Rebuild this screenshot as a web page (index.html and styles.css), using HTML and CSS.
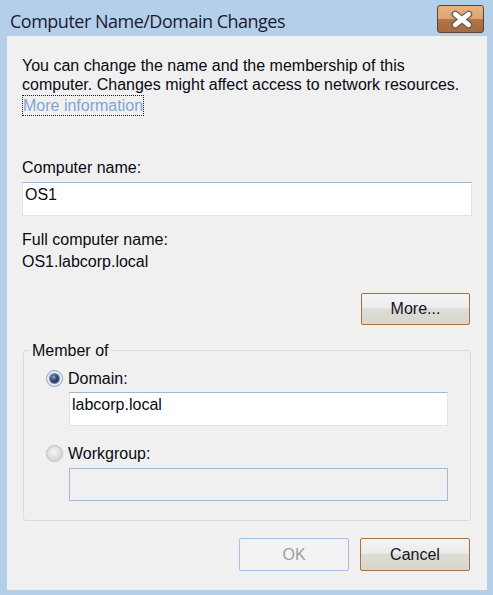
FILE: index.html
```html
<!DOCTYPE html>
<html>
<head>
<meta charset="utf-8">
<link rel="stylesheet" href="styles.css">
</head>
<body>
<div class="window">
  <div class="titlebar">
    <span class="title">Computer Name/Domain Changes</span>
    <button class="close" type="button" aria-label="Close">
      <svg width="47" height="27" viewBox="0 0 47 27">
        <g stroke-linecap="round">
          <path d="M18 8 L32 19 M32 8 L18 19" stroke="#5e5a58" stroke-width="7.5" fill="none"/>
          <path d="M18 8 L32 19 M32 8 L18 19" stroke="#ffffff" stroke-width="5" fill="none"/>
        </g>
      </svg>
    </button>
  </div>
  <div class="client">
    <p class="intro">You can change the name and the membership of this<br>computer. Changes might affect access to network resources.</p>
    <a class="link">More information</a>
    <div class="lbl cn-label">Computer name:</div>
    <div class="textbox main">OS1</div>
    <div class="lbl full-label">Full computer name:</div>
    <div class="lbl full-value">OS1.labcorp.local</div>
    <div class="row-right more-row">
      <button class="btn default" type="button">More...</button>
    </div>
    <fieldset class="group">
      <legend>Member of</legend>
      <div class="radio-row">
        <span class="radio checked"></span><span>Domain:</span>
      </div>
      <div class="textbox sub">labcorp.local</div>
      <div class="radio-row wg">
        <span class="radio disabled"></span><span>Workgroup:</span>
      </div>
      <div class="textbox sub disabled"></div>
    </fieldset>
    <div class="row-right actions">
      <button class="btn off" type="button">OK</button>
      <button class="btn default" type="button">Cancel</button>
    </div>
  </div>
</div>
</body>
</html>
```

FILE: styles.css
```css
html, body {
  margin: 0;
  padding: 0;
  background: #b3cfe9;
}

.window {
  width: 493px;
  height: 595px;
  background: #b3cfe9;
  overflow: hidden;
}

.titlebar {
  height: 36px;
  display: flex;
  align-items: flex-start;
}

.title {
  font-family: "Open Sans", "Noto Sans", sans-serif;
  font-size: 18px;
  line-height: 26px;
  color: #1c1a2e;
  margin: 8px 0 0 10px;
  letter-spacing: -0.5px;
}

.close {
  margin: 5px 9px 0 auto;
  width: 47px;
  height: 28px;
  padding: 0;
  border: 1px solid #5f4330;
  border-radius: 3px;
  background: linear-gradient(#e8b27f 0%, #e2a470 48%, #b2744a 52%, #a56a40 100%);
  display: flex;
  align-items: center;
  justify-content: center;
}

.close svg {
  display: block;
}

.client {
  margin: 0 6px 0 7px;
  height: 554px;
  box-sizing: border-box;
  background: #f0f0f0;
  padding: 20px 15px 0 15px;
  font-family: "Liberation Sans", Arial, sans-serif;
  font-size: 16px;
  line-height: 19px;
  color: #0a0a14;
}

.intro {
  margin: 0;
}

.link {
  display: block;
  width: fit-content;
  margin-top: 1px;
  border: 1px dotted #1a1a30;
  color: #7fa6d4;
  text-decoration: none;
}

.lbl {
  display: block;
}

.cn-label {
  margin-top: 42px;
}

.textbox {
  box-sizing: border-box;
  height: 34px;
  background: #fff;
  border: 1px solid #e1e3e8;
  border-top-color: #9db9d8;
  padding: 2px 2px;
}

.textbox.main {
  margin-top: 5px;
  width: 450px;
}

.full-label {
  margin-top: 14px;
}

.full-value {
  margin-top: 3px;
}

.row-right {
  display: flex;
  justify-content: flex-end;
  padding-right: 2px;
}

.more-row {
  margin-top: 22px;
}

.btn {
  box-sizing: border-box;
  width: 109px;
  height: 32px;
  padding: 0;
  border-radius: 2px;
  font-family: "Liberation Sans", Arial, sans-serif;
  font-size: 16px;
  color: #14142a;
}

.btn.default {
  border: 1px solid #a8713f;
  background: linear-gradient(#f4f4f4 0%, #ececec 45%, #dddcd5 50%, #d6d5ce 100%);
}

.btn.off {
  border: 1px solid #a8c0da;
  background: #f3f3f3;
  color: #a49e98;
}

.group {
  margin: 16px 1px 0 1px;
  padding: 9px 0 19px 0;
  border: 1px solid #d9dcdf;
  border-radius: 3px;
  min-width: 0;
}

.group legend {
  margin-left: 6px;
  padding: 0 2px;
  line-height: 19px;
}

.radio-row {
  display: flex;
  align-items: center;
  height: 19px;
  padding-left: 22px;
  gap: 5px;
}

.radio-row.wg {
  margin-top: 18px;
}

.radio {
  box-sizing: border-box;
  width: 17px;
  height: 17px;
  border-radius: 50%;
  position: relative;
  flex: none;
}

.radio.checked {
  border: 1px solid #8ca6c6;
  background: radial-gradient(circle at 50% 50%, #ffffff 0%, #e6ecf3 60%, #cfd9e6 100%);
}

.radio.checked::after {
  content: "";
  position: absolute;
  left: 3px;
  top: 3px;
  width: 9px;
  height: 9px;
  border-radius: 50%;
  background: radial-gradient(circle at 40% 35%, #8fa4c8 0%, #34406a 45%, #1b2245 100%);
  box-shadow: 0 0 0 1px #6f86a8;
}

.radio.disabled {
  border: 1px solid #b6c2ce;
  background: radial-gradient(circle at 45% 40%, #f6f6f6 0%, #dcdcdc 55%, #cacaca 100%);
}

.textbox.sub {
  margin-left: 45px;
  width: 379px;
  margin-top: 4px;
}

.textbox.sub.disabled {
  margin-top: 5px;
  height: 33px;
  background: #f0f0f0;
  border: 1px solid #a3bbd6;
}

.actions {
  margin-top: 17px;
  gap: 11px;
}

.actions .btn {
  width: 110px;
  height: 33px;
}
```
